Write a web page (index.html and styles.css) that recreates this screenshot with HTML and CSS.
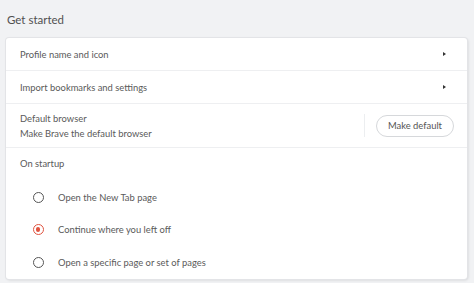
FILE: index.html
```html
<!DOCTYPE html>
<html lang="en">
<head>
    <meta charset="UTF-8">
    <title>Settings - Get started</title>
    <link rel="stylesheet" href="styles.css">
</head>
<body>
    <div class="page">
        <h2 class="section-title">Get started</h2>

        <div class="card">
            <div class="row link-row">
                <span>Profile name and icon</span>
                <span class="arrow"></span>
            </div>
            <div class="row link-row">
                <span>Import bookmarks and settings</span>
                <span class="arrow"></span>
            </div>
            <div class="row browser-row">
                <div class="browser-text">
                    <div>Default browser</div>
                    <div>Make Brave the default browser</div>
                </div>
                <div class="divider"></div>
                <button class="pill-button">Make default</button>
            </div>
            <div class="startup">
                <div class="startup-title">On startup</div>
                <label class="radio-row">
                    <span class="radio"></span>
                    <span>Open the New Tab page</span>
                </label>
                <label class="radio-row">
                    <span class="radio checked"></span>
                    <span>Continue where you left off</span>
                </label>
                <label class="radio-row">
                    <span class="radio"></span>
                    <span>Open a specific page or set of pages</span>
                </label>
            </div>
        </div>
    </div>
</body>
</html>
```

FILE: styles.css
```css
* {
    margin: 0;
    padding: 0;
    box-sizing: border-box;
}

body {
    font-family: Lato, "Open Sans", sans-serif;
    background: #f1f2f4;
    color: #5a5a5a;
    width: 474px;
    height: 283px;
    overflow: hidden;
}

.page {
    padding: 13px 7px 0 6px;
}

.section-title {
    font-size: 11.5px;
    font-weight: 400;
    color: #505050;
    padding-left: 1px;
    margin-bottom: 11px;
    line-height: 14px;
}

.card {
    background: #fff;
    border-radius: 3px;
    box-shadow: 0 0 0 1px #e3e4e7, 1px 1px 3px rgba(0, 0, 0, 0.15);
    width: 461px;
}

.row {
    display: flex;
    align-items: center;
    padding: 0 14px;
    font-size: 9.4px;
    border-bottom: 1px solid #eeeff1;
}

.link-row {
    height: 33px;
    justify-content: space-between;
}

.arrow {
    width: 0;
    height: 0;
    border-top: 2.5px solid transparent;
    border-bottom: 2.5px solid transparent;
    border-left: 3.5px solid #333;
    margin-right: 7px;
}

.browser-row {
    height: 44px;
}

.browser-text {
    flex: 1;
    line-height: 15px;
    padding-top: 1px;
}

.divider {
    width: 1px;
    height: 23px;
    background: #eceef0;
    margin-right: 11px;
}

.pill-button {
    font-family: inherit;
    font-size: 9.4px;
    color: #555;
    background: #fff;
    border: 1px solid #d6d8db;
    border-radius: 12px;
    height: 22px;
    padding: 0 11px;
    margin-right: -1px;
}

.startup {
    padding: 9px 14px 0;
    font-size: 9.4px;
}

.startup-title {
    line-height: 14px;
    margin-bottom: 10px;
}

.radio-row {
    display: flex;
    align-items: center;
    height: 32.5px;
    padding-left: 13px;
}

.radio {
    width: 11px;
    height: 11px;
    border: 1.5px solid #555;
    border-radius: 50%;
    margin-right: 14px;
    position: relative;
}

.radio.checked {
    border-color: #e0533f;
    background: #fff;
}

.radio.checked::after {
    content: "";
    position: absolute;
    left: 1.6px;
    top: 1.6px;
    width: 4.8px;
    height: 4.8px;
    border-radius: 50%;
    background: #e0533f;
}
```
